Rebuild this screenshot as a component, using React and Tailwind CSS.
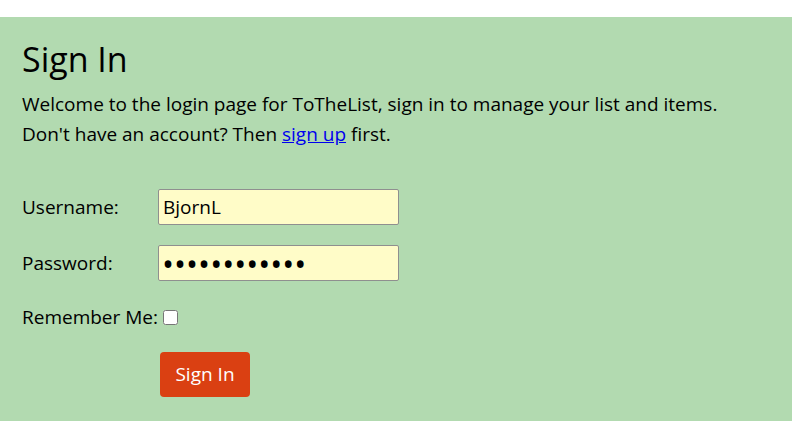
export default function App() {
  return (
    <div className="min-h-[421px] bg-white pt-[17px]" style={{ fontFamily: '"Open Sans", "Noto Sans", sans-serif' }}>
      <div className="min-h-[404px] bg-[#b2dab0] px-[22px] pt-[20px] text-black">
        <h1 className="text-[34px] leading-[44px]">Sign In</h1>
        <p className="mt-[8px] text-[19px] leading-[30px]">
          Welcome to the login page for ToTheList, sign in to manage your list and items.
          <br />
          Don't have an account? Then{' '}
          <a href="#" className="text-[#0000ee] underline">sign up</a> first.
        </p>

        <form className="mt-[40px] flex flex-col text-[19px]">
          <div className="flex items-center">
            <label className="w-[136px]">Username:</label>
            <input
              defaultValue="BjornL"
              className="h-[36px] w-[241px] rounded-[2px] border border-[#8f8f8f] bg-[#fffcc8] px-[4px] text-[19px]"
            />
          </div>
          <div className="mt-[20px] flex items-center">
            <label className="w-[136px]">Password:</label>
            <input
              type="password"
              defaultValue="secretpasswd"
              className="h-[36px] w-[241px] rounded-[2px] border border-[#8f8f8f] bg-[#fffcc8] px-[3px] text-[32px] leading-none"
            />
          </div>
          <div className="mt-[22px] flex items-center">
            <label>Remember Me:</label>
            <input type="checkbox" className="ml-[5px] h-[15px] w-[15px]" />
          </div>
          <div className="mt-[20px] pl-[138px]">
            <button
              type="button"
              className="h-[45px] w-[90px] rounded-[4px] bg-[#da4012] text-[19px] text-white"
            >
              Sign In
            </button>
          </div>
        </form>
      </div>
    </div>
  );
}
